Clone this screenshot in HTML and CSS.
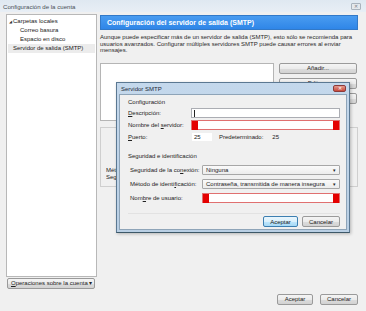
FILE: index.html
```html
<!DOCTYPE html>
<html lang="es">
<head>
  <meta charset="UTF-8">
  <title>Configuración de la cuenta</title>
  <link rel="stylesheet" href="styles.css">
</head>
<body>
  <div class="window">
    <div class="titlebar">
      <span class="title">Configuración de la cuenta</span>
      <span class="win-close">✕</span>
    </div>

    <div class="layout">
      <aside class="sidebar">
        <div class="tree">
          <div class="tree-item"><span class="twisty">◢</span>Carpetas locales</div>
          <div class="tree-item child">Correo basura</div>
          <div class="tree-item child">Espacio en disco</div>
          <div class="tree-item selected">Servidor de salida (SMTP)</div>
        </div>
        <button class="btn acct-btn"><u>O</u>peraciones sobre la cuenta ▾</button>
      </aside>

      <main class="content">
        <div class="page-header">Configuración del servidor de salida (SMTP)</div>
        <p class="intro">Aunque puede especificar más de un servidor de salida (SMTP), esto sólo se recomienda para usuarios avanzados. Configurar múltiples servidores SMTP puede causar errores al enviar mensajes.</p>

        <div class="server-row">
          <div class="server-list"></div>
          <div class="server-buttons">
            <button class="btn">Añadir...</button>
            <button class="btn">Editar...</button>
            <button class="btn">Eliminar</button>
          </div>
        </div>

        <div class="details">
          <div class="detail-line">Método de identificación:</div>
          <div class="detail-line">Seguridad de la conexión:</div>
        </div>

        <div class="footer-buttons">
          <button class="btn">Aceptar</button>
          <button class="btn">Cancelar</button>
        </div>
      </main>
    </div>

    <div class="dialog">
      <div class="dialog-title">
        <span>Servidor SMTP</span>
        <span class="dialog-close">✕</span>
      </div>
      <div class="dialog-body">
        <div class="group-title">Configuración</div>
        <div class="form-grid first">
          <label><u>D</u>escripción:</label>
          <div class="field"><span class="caret"></span></div>
          <label>Nombre del <u>s</u>ervidor:</label>
          <div class="field redacted"><span class="mark"></span><span class="mark"></span></div>
          <label><u>P</u>uerto:</label>
          <div class="port-row">
            <div class="field port">25</div>
            <span>Predeterminado:</span>
            <span>25</span>
          </div>
        </div>

        <div class="group-title second">Seguridad e identificación</div>
        <div class="form-grid security">
          <label>Seguridad de la co<u>n</u>exión:</label>
          <div class="select">Ninguna<span class="arrow">▾</span></div>
          <label>Método de identi<u>f</u>icación:</label>
          <div class="select">Contraseña, transmitida de manera insegura<span class="arrow">▾</span></div>
          <label>Nom<u>b</u>re de usuario:</label>
          <div class="field redacted"><span class="mark"></span><span class="mark"></span></div>
        </div>

        <div class="dialog-buttons">
          <button class="btn default">Aceptar</button>
          <button class="btn">Cancelar</button>
        </div>
      </div>
    </div>
  </div>
</body>
</html>
```

FILE: styles.css
```css
* { box-sizing: border-box; margin: 0; padding: 0; }
body {
  font-family: 'Liberation Sans', Arial, sans-serif;
  font-size: 6px;
  color: #222;
  background: #f0f0f0;
}

.window {
  position: relative;
  width: 366px;
  height: 311px;
  background: #f0f0f0;
  overflow: hidden;
}

.titlebar {
  height: 12px;
  display: flex;
  align-items: center;
  justify-content: space-between;
  padding: 0 5px 0 3px;
  background: linear-gradient(to bottom, #dfe8f1, #e8eef5);
  color: #4a4f57;
  font-size: 6.1px;
}
.win-close {
  width: 10px;
  height: 7px;
  border: 1px solid #a9b3bd;
  border-radius: 1px;
  background: #e4e8ec;
  color: #7a8088;
  font-size: 5px;
  line-height: 5px;
  text-align: center;
}

.layout {
  display: flex;
  align-items: flex-start;
  gap: 3px;
  padding: 2px 8px 0 6px;
}

.sidebar {
  width: 91px;
  display: flex;
  flex-direction: column;
  gap: 1px;
}
.tree {
  height: 263px;
  background: #fff;
  border: 1px solid #b8b8b8;
  padding-top: 2px;
}
.tree-item {
  height: 9px;
  line-height: 9px;
  padding-left: 6px;
  white-space: nowrap;
}
.tree-item.child { padding-left: 13px; }
.tree-item.selected { background: #ececec; margin: 0 1px; padding-left: 5px; }
.twisty {
  display: inline-block;
  width: 4px;
  font-size: 4px;
  margin-left: -4px;
  color: #333;
}

.btn {
  font-family: inherit;
  font-size: 6px;
  color: #222;
  height: 11px;
  border: 1px solid #9a9a9a;
  border-radius: 2px;
  background: linear-gradient(to bottom, #f4f4f4 0%, #ebebeb 50%, #dcdcdc 51%, #d2d2d2 100%);
  padding: 0 4px;
  white-space: nowrap;
}
.acct-btn {
  width: 88px;
  margin-left: 1px;
  text-align: left;
  padding-left: 3px;
  line-height: 9px;
}

.content {
  width: 258px;
  display: flex;
  flex-direction: column;
}
.page-header {
  height: 15px;
  margin-top: 1px;
  padding-left: 6px;
  line-height: 13px;
  font-size: 7px;
  font-weight: bold;
  color: #fff;
  background: linear-gradient(to bottom, #4a9cf0, #2f86e8);
  border: 1px solid #3279c8;
}
.intro {
  margin-top: 4px;
  line-height: 6.6px;
  color: #2a2a2a;
  padding-right: 4px;
}

.server-row {
  display: flex;
  gap: 5px;
  margin-top: 9px;
}
.server-list {
  width: 174px;
  height: 58px;
  background: #fff;
  border: 1px solid #b5b5b5;
}
.server-buttons {
  display: flex;
  flex-direction: column;
  gap: 4px;
  width: 78px;
}
.server-buttons .btn { width: 78px; }

.details {
  margin-top: 6px;
  height: 60px;
  border: 1px solid #cfcfcf;
  padding: 39px 0 0 5px;
}
/* only the start of these labels shows left of the dialog */
.detail-line {
  width: 11px;
  overflow: hidden;
  white-space: nowrap;
  line-height: 7px;
}

.footer-buttons {
  display: flex;
  justify-content: flex-end;
  gap: 7px;
  margin-top: 107px;
}
.footer-buttons .btn:first-child { width: 36px; }
.footer-buttons .btn:last-child { width: 38px; }

/* modal dialog over the page */
.dialog {
  position: absolute;
  left: 116px;
  top: 82px;
  width: 234px;
  height: 151px;
  border: 1px solid #5b7892;
  border-bottom-color: #3d5868;
  background: linear-gradient(to bottom, #c4d8ec, #b9cfe4);
  padding: 0 2px 2px 2px;
  display: flex;
  flex-direction: column;
  box-shadow: 1px 1px 3px rgba(0, 0, 0, 0.25);
}
.dialog-title {
  height: 11px;
  display: flex;
  align-items: center;
  justify-content: space-between;
  padding-left: 2px;
  color: #1d2a38;
}
.dialog-close {
  width: 13px;
  height: 7px;
  margin-right: 1px;
  border: 1px solid #8c3a3a;
  border-radius: 2px;
  background: linear-gradient(to bottom, #e49a8e, #c8483a);
  color: #fff;
  font-size: 5px;
  line-height: 5px;
  text-align: center;
}
.dialog-body {
  flex: 1;
  background: #f0f0f0;
  border: 1px solid #8ea4b8;
  padding: 3px 6px 0 8px;
}
.group-title {
  height: 8px;
  line-height: 8px;
}
.group-title.second { margin-top: 10px; }

.form-grid {
  display: grid;
  grid-template-columns: 63px 1fr;
  grid-auto-rows: 10px;
  row-gap: 2px;
  align-items: center;
  margin-top: 2px;
}
.form-grid.security {
  grid-template-columns: 72px 1fr;
  row-gap: 4px;
  padding-left: 2px;
  margin-top: 5px;
}
.form-grid label { white-space: nowrap; }
.field {
  height: 10px;
  background: #fff;
  border: 1px solid #abadb3;
  position: relative;
  display: flex;
  align-items: center;
  padding-left: 2px;
}
.caret {
  width: 1px;
  height: 7px;
  background: #222;
}
.field.redacted {
  border-color: #e07070;
  justify-content: space-between;
  padding: 0;
}
.mark {
  width: 6px;
  height: 9px;
  background: #e40000;
}
.port-row {
  display: flex;
  align-items: center;
  gap: 6px;
}
.field.port {
  width: 22px;
  border-color: #f0f0f0;
}
.port-row span:last-child { margin-left: 3px; }

.select {
  height: 10px;
  background: linear-gradient(to bottom, #fafafa, #ececec);
  border: 1px solid #a7a7a7;
  border-radius: 1px;
  padding-left: 3px;
  line-height: 8px;
  display: flex;
  justify-content: space-between;
  white-space: nowrap;
}
.arrow {
  font-size: 5px;
  padding-right: 3px;
}

.dialog-buttons {
  display: flex;
  justify-content: flex-end;
  gap: 4px;
  margin-top: 10px;
  padding-top: 2px;
  border-top: 1px solid #e2e2e2;
}
.dialog-buttons .btn:first-child { width: 35px; }
.dialog-buttons .btn:last-child { width: 38px; }
.btn.default {
  border-color: #3c7fb1;
  background: linear-gradient(to bottom, #eaf6fd 0%, #d9f0fc 50%, #bee6fd 51%, #a7d9f5 100%);
}
```
